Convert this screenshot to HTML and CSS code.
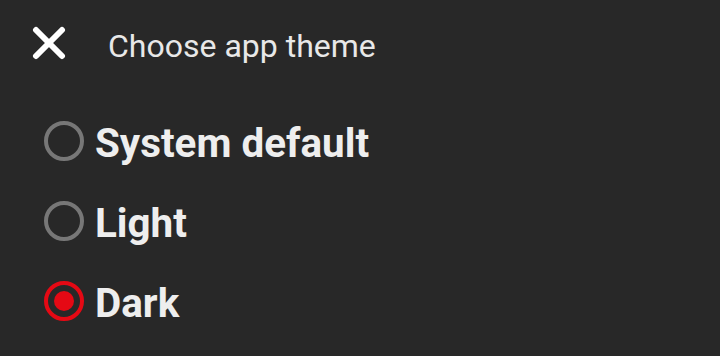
FILE: index.html
```html
<!DOCTYPE html>
<html>
<head>
<meta charset="utf-8">
<link rel="stylesheet" href="styles.css">
</head>
<body>
<div class="sheet">
  <header class="header">
    <svg class="close" viewBox="0 0 34 34" width="34" height="34" aria-hidden="true">
      <line x1="4" y1="4" x2="30" y2="30" />
      <line x1="30" y1="4" x2="4" y2="30" />
    </svg>
    <span class="title">Choose app theme</span>
  </header>
  <ul class="options">
    <li class="option">
      <span class="radio"></span>
      <span class="label">System default</span>
    </li>
    <li class="option">
      <span class="radio"></span>
      <span class="label">Light</span>
    </li>
    <li class="option">
      <span class="radio checked"></span>
      <span class="label">Dark</span>
    </li>
  </ul>
</div>
</body>
</html>
```
FILE: styles.css
```css
html, body {
  margin: 0;
  padding: 0;
  background: #282828;
}
.sheet {
  width: 720px;
  height: 356px;
  font-family: Roboto, "Noto Sans", sans-serif;
}
.header {
  display: flex;
  align-items: center;
  height: 86px;
  padding-left: 32px;
}
.close {
  display: block;
  flex: none;
}
.close line {
  stroke: #ffffff;
  stroke-width: 6;
  stroke-linecap: round;
}
.title {
  margin-left: 42px;
  margin-top: 5px;
  font-size: 32px;
  font-weight: 400;
  color: #e8e8e8;
}
.options {
  list-style: none;
  margin: 0;
  padding: 15px 0 0 44px;
}
.option {
  display: flex;
  align-items: center;
  height: 80px;
}
.radio {
  box-sizing: border-box;
  width: 40px;
  height: 40px;
  border-radius: 50%;
  border: 4px solid #777777;
  flex: none;
  display: flex;
  align-items: center;
  justify-content: center;
}
.radio.checked {
  border-color: #e50914;
}
.radio.checked::after {
  content: "";
  width: 20px;
  height: 20px;
  border-radius: 50%;
  background: #e50914;
}
.label {
  margin-left: 11px;
  margin-top: 4px;
  font-size: 40.4px;
  font-weight: 700;
  color: #eeeeee;
}
```
